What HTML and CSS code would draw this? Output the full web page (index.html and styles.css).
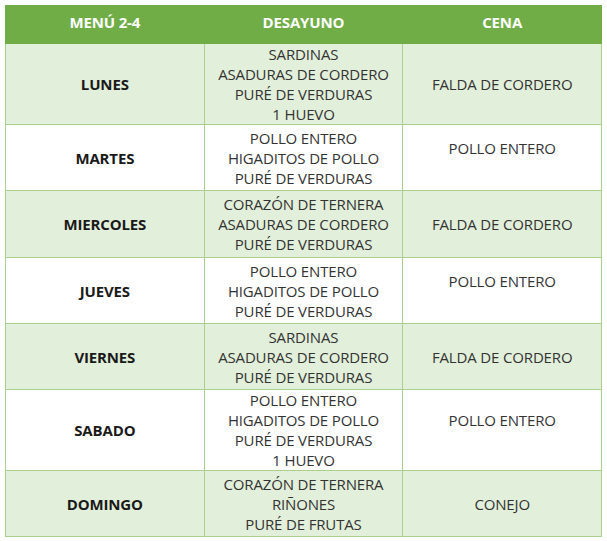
FILE: index.html
```html
<!DOCTYPE html>
<html lang="es">
<head>
<meta charset="utf-8">
<title>Menú 2-4</title>
<link rel="stylesheet" href="styles.css">
</head>
<body>
<table class="menu">
  <thead>
    <tr class="head"><th>MENÚ 2-4</th><th>DESAYUNO</th><th>CENA</th></tr>
  </thead>
  <tbody>
    <tr class="alt tall">
      <td class="day">LUNES</td>
      <td>SARDINAS<br>ASADURAS DE CORDERO<br>PURÉ DE VERDURAS<br>1 HUEVO</td>
      <td>FALDA DE CORDERO</td>
    </tr>
    <tr>
      <td class="day">MARTES</td>
      <td>POLLO ENTERO<br>HIGADITOS DE POLLO<br>PURÉ DE VERDURAS</td>
      <td>POLLO ENTERO<br>&nbsp;</td>
    </tr>
    <tr class="alt mid">
      <td class="day">MIERCOLES</td>
      <td>CORAZÓN DE TERNERA<br>ASADURAS DE CORDERO<br>PURÉ DE VERDURAS</td>
      <td>FALDA DE CORDERO</td>
    </tr>
    <tr>
      <td class="day">JUEVES</td>
      <td>POLLO ENTERO<br>HIGADITOS DE POLLO<br>PURÉ DE VERDURAS</td>
      <td>POLLO ENTERO<br>&nbsp;</td>
    </tr>
    <tr class="alt">
      <td class="day">VIERNES</td>
      <td>SARDINAS<br>ASADURAS DE CORDERO<br>PURÉ DE VERDURAS</td>
      <td>FALDA DE CORDERO</td>
    </tr>
    <tr class="tall">
      <td class="day">SABADO</td>
      <td>POLLO ENTERO<br>HIGADITOS DE POLLO<br>PURÉ DE VERDURAS<br>1 HUEVO</td>
      <td>POLLO ENTERO<br>&nbsp;</td>
    </tr>
    <tr class="alt">
      <td class="day">DOMINGO</td>
      <td>CORAZÓN DE TERNERA<br>RIÑONES<br>PURÉ DE FRUTAS</td>
      <td>CONEJO</td>
    </tr>
  </tbody>
</table>
</body>
</html>
```
FILE: styles.css
```css
html, body {
  margin: 0;
  padding: 0;
  background: #ffffff;
}
body {
  padding: 5px 6px 0 5px;
  font-family: "Open Sans", "Noto Sans", sans-serif;
  font-size: 15px;
  letter-spacing: -0.15px;
  color: #333333;
}
.menu {
  width: 597px;
  border-collapse: collapse;
  table-layout: fixed;
  line-height: 20px;
}
.menu th, .menu td {
  width: 33.33%;
  text-align: center;
  vertical-align: middle;
  padding: 0 4px;
}
.head th {
  background: #70ad47;
  color: #ffffff;
  font-weight: 700;
  height: 31px;
  border: 1px solid #70ad47;
  padding-top: 0;
  padding-bottom: 6px;
}
.menu td {
  border: 1px solid #a9d08e;
}
.menu tbody tr {
  height: 66px;
}
.menu tbody tr.mid {
  height: 67px;
}
.menu tbody tr.tall {
  height: 81px;
}
.alt td {
  background: #e2efda;
}
.day {
  font-weight: 700;
  color: #1a1a1a;
}
```
